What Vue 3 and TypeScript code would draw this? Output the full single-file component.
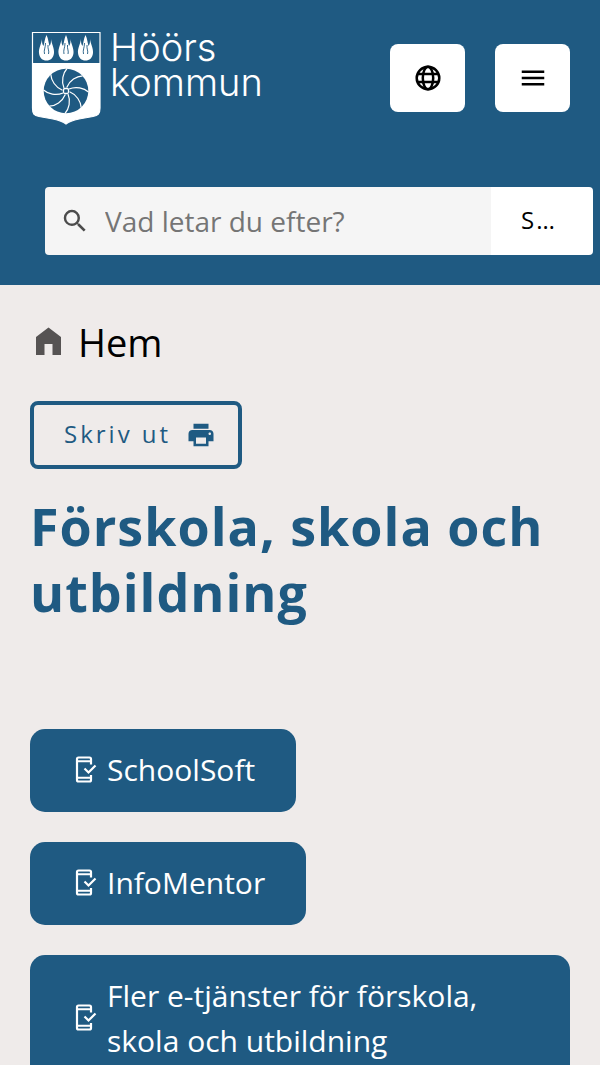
<script setup lang="ts">
interface Service {
  label: string
  href: string
}

const services: Service[] = [
  { label: 'SchoolSoft', href: '#schoolsoft' },
  { label: 'InfoMentor', href: '#infomentor' },
  { label: 'Fler e-tjänster för förskola, skola och utbildning', href: '#e-tjanster' },
]

const flames: number[] = [15.5, 35, 54.5]
const spokes: number[] = Array.from({ length: 8 }, (_, i) => i * 45)
</script>

<template>
  <div class="page">
    <header class="header">
      <div class="topbar">
        <a class="brand" href="#start">
          <svg class="shield" viewBox="0 0 70 96" aria-hidden="true">
            <path d="M1.500 2.500H69V78C69 84 67 85.500 62 86.500L48 89Q39 91 35 94Q31 91 22 89L8 86.500C3 85.500 1.500 84 1.500 78Z" fill="#1f5a82" stroke="#fff" stroke-width="1.200" />
            <path d="M1.500 33H69V78C69 84 67 85.500 62 86.500L48 89Q39 91 35 94Q31 91 22 89L8 86.500C3 85.500 1.500 84 1.500 78Z" fill="#fff" />
            <g v-for="x in flames" :key="x" :transform="`translate(${x} 0)`">
              <path d="M0 5C2 9 2 13 3 16C4.500 14 4.500 12 4.500 9C5 14 8 18 7.500 23C7 28 4 30.500 0 30.500S-7 28-7.500 23C-8 18-5 14-4.500 9C-4.500 12-4.500 14-3 16C-2 13-2 9 0 5Z" fill="#fff" />
              <path d="M-1 13C-1 18-3 20-2 24M1.500 15C1 19 3 21 2 24" fill="none" stroke="#1f5a82" stroke-width="0.900" />
            </g>
            <circle cx="35" cy="61" r="22.300" fill="#1f5a82" />
            <g fill="none" stroke="#fff" stroke-width="1.200">
              <path v-for="angle in spokes" :key="angle" d="M33 58C30 51 32 43 36 38.500" :transform="`rotate(${angle} 35 61)`" />
              <rect x="32.500" y="58.500" width="5" height="5" rx="1.500" stroke-width="1.300" />
            </g>
          </svg>
          <span class="wordmark">Höörs<br>kommun</span>
        </a>
        <div class="actions">
          <button class="square" type="button" aria-label="Språk">
            <svg class="icon" viewBox="0 0 30 30" fill="none" stroke="#000" stroke-width="2.500" aria-hidden="true">
              <circle cx="15" cy="15" r="11.300" />
              <ellipse cx="15" cy="15" rx="5.200" ry="11.300" />
              <path d="M4.500 11H25.500M4.500 19H25.500" />
            </svg>
          </button>
          <button class="square" type="button" aria-label="Meny">
            <svg class="icon" viewBox="0 0 30 30" stroke="#000" stroke-width="2.500" aria-hidden="true">
              <path d="M3.750 8.750H26.250M3.750 15H26.250M3.750 21.250H26.250" />
            </svg>
          </button>
        </div>
      </div>
      <form class="search" role="search" @submit.prevent>
        <label class="field">
          <svg class="icon" viewBox="0 0 24 24" fill="#4c4c4c" aria-hidden="true">
            <path d="M15.500 14h-.79l-.28-.27A6.470 6.470 0 0 0 16 9.500 6.500 6.500 0 1 0 9.500 16c1.610 0 3.090-.59 4.230-1.570l.27.28v.79l5 4.990L20.490 19zm-6 0C7.010 14 5 11.990 5 9.500S7.010 5 9.500 5 14 7.010 14 9.500 11.990 14 9.500 14" />
          </svg>
          <input class="query" type="text" placeholder="Vad letar du efter?" aria-label="Vad letar du efter?">
        </label>
        <button class="submit" type="submit">Sök</button>
      </form>
    </header>

    <main class="content">
      <nav class="crumbs" aria-label="Brödsmulor">
        <svg class="home" viewBox="0 0 38 38" fill="#565353" aria-hidden="true">
          <path d="M6 32V14L18.500 4.500 31 14V32H22.500V21H14.500V32Z" />
        </svg>
        <a class="crumb" href="#hem">Hem</a>
      </nav>

      <button class="print" type="button">
        <span class="print-label">Skriv ut</span>
        <svg class="icon" viewBox="0 0 24 24" fill="currentColor" aria-hidden="true">
          <path d="M19 8H5c-1.660 0-3 1.340-3 3v6h4v4h12v-4h4v-6c0-1.660-1.340-3-3-3m-3 11H8v-5h8zm3-7c-.55 0-1-.45-1-1s.45-1 1-1 1 .45 1 1-.45 1-1 1m-1-9H6v4h12z" />
        </svg>
      </button>

      <h1 class="title">Förskola, skola och utbildning</h1>

      <ul class="services">
        <li v-for="service in services" :key="service.label">
          <a class="service" :href="service.href">
            <svg class="phone" viewBox="0 0 24 30" fill="none" stroke="#fff" aria-hidden="true">
              <path d="M16 9.500V4Q16 2.500 14.500 2.500H3.500Q2 2.500 2 4V25Q2 26.500 3.500 26.500H14.500Q16 26.500 16 25V20" stroke-width="2.200" />
              <path d="M2 6.300H16M2 22.700H16" stroke-width="2" />
              <path d="M9.500 13.500L13.500 17.500L20.500 10.500" stroke-width="2.200" />
            </svg>
            <span>{{ service.label }}</span>
          </a>
        </li>
      </ul>
    </main>
  </div>
</template>

<style>
body {
  margin: 0;
  background: #efebea;
}
</style>

<style scoped>
.page {
  height: 100vh;
  overflow: hidden;
  background: #efebea;
  color: #000;
  font-family: "Open Sans", "Noto Sans", sans-serif;
  font-size: 30px;
  line-height: 45px;
}

button,
input {
  margin: 0;
  border: 0;
  font-family: inherit;
}

.icon {
  flex: none;
  width: 30px;
  height: 30px;
}

.header {
  padding: 30px 0;
  background: #1f5a82;
}

.topbar {
  display: flex;
  justify-content: space-between;
  align-items: center;
  padding: 0 30px;
}

.brand {
  display: flex;
  gap: 9px;
  color: #fff;
  text-decoration: none;
}

.shield {
  width: 70px;
  height: 96px;
  margin-left: 1px;
}

.wordmark {
  font-family: Inter, "Liberation Sans", sans-serif;
  font-size: 38px;
  font-weight: 300;
  line-height: 35px;
}

.actions {
  display: flex;
  gap: 30px;
}

.square {
  display: flex;
  justify-content: center;
  align-items: center;
  width: 75px;
  height: 68px;
  padding: 0;
  border-radius: 8px;
  background: #fff;
}

.search {
  display: flex;
  height: 68px;
  margin: 61px 7px 0 45px;
  border-radius: 4px;
  overflow: hidden;
}

.field {
  display: flex;
  flex: 1;
  align-items: center;
  gap: 15px;
  min-width: 0;
  padding-left: 15px;
  background: #f5f5f5;
}

.query {
  flex: 1;
  min-width: 0;
  height: 68px;
  padding: 0;
  background: transparent;
  font-size: 28px;
}

.query::placeholder {
  color: #757575;
  opacity: 1;
}

.submit {
  width: 102px;
  padding: 0 30px 4px;
  background: #fff;
  color: #000;
  font-size: 24px;
  font-weight: 500;
  letter-spacing: 2px;
  text-overflow: ellipsis;
  white-space: nowrap;
  overflow: hidden;
}

.content {
  padding: 30px;
}

.crumbs {
  display: flex;
  align-items: center;
  gap: 10px;
  height: 54px;
}

.home {
  width: 38px;
  height: 38px;
}

.crumb {
  color: #000;
  font-size: 38px;
  line-height: 54px;
  text-decoration: none;
}

.print {
  display: flex;
  align-items: center;
  gap: 15px;
  height: 68px;
  margin-top: 32px;
  padding: 0 22px 0 30px;
  border: 4px solid #1f5a82;
  border-radius: 8px;
  background: transparent;
  color: #1f5a82;
  font-size: 24px;
  font-weight: 500;
  letter-spacing: 3px;
}

.print-label {
  padding-bottom: 4px;
}

.title {
  margin: 24px 0 0;
  color: #1f5a82;
  font-size: 52px;
  font-weight: 700;
  letter-spacing: 1px;
  line-height: 66px;
}

.services {
  display: flex;
  flex-direction: column;
  gap: 30px;
  margin: 104px 0 0;
  padding: 0;
  list-style: none;
}

.services li {
  display: flex;
}

.service {
  display: flex;
  align-items: center;
  gap: 8px;
  padding: 18px 41px 20px 45px;
  border-radius: 15px;
  background: #1f5a82;
  color: #fff;
  text-decoration: none;
}

.phone {
  flex: none;
  width: 24px;
  height: 30px;
}
</style>
